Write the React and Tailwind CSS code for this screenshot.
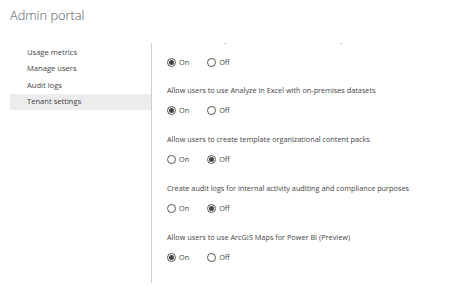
const sections = [
  { label: "Allow users to use Analyze in Excel with on-premises datasets", on: true },
  { label: "Allow users to create template organizational content packs", on: false },
  { label: "Create audit logs for internal activity auditing and compliance purposes", on: false },
  { label: "Allow users to use ArcGIS Maps for Power BI (Preview)", on: true },
]

const navItems = ["Usage metrics", "Manage users", "Audit logs", "Tenant settings"]

function Radio({ checked, label }) {
  return (
    <span className="flex items-center gap-[3px]">
      <span className="flex h-[9px] w-[9px] items-center justify-center rounded-full border border-[#555]">
        {checked && <span className="h-[5px] w-[5px] rounded-full bg-[#444]" />}
      </span>
      <span>{label}</span>
    </span>
  )
}

function RadioRow({ on }) {
  return (
    <div className="flex h-[12px] items-center gap-[18px]">
      <Radio checked={on} label="On" />
      <Radio checked={!on} label="Off" />
    </div>
  )
}

export default function App() {
  return (
    <div className="h-[295px] w-[456px] overflow-hidden bg-white text-[#444] font-['Segoe_UI','Open_Sans',sans-serif]">
      <h1 className="pl-[10px] pt-[5px] text-[12.8px] font-light leading-[20px] text-[#555]">
        Admin portal
      </h1>

      <div className="mt-[18px] flex">
        <nav className="ml-[10px] w-[141px] pt-[1px] text-[7.6px]">
          {navItems.map((item) => (
            <div
              key={item}
              className={
                "flex h-[16.6px] items-center pl-[17px] " +
                (item === "Tenant settings" ? "bg-[#ececec]" : "")
              }
            >
              {item}
            </div>
          ))}
        </nav>

        <div className="h-[240px] flex-1 overflow-hidden border-l border-[#cfcfcf] pl-[15px] text-[7.3px]">
          {/* previous setting, scrolled mostly out of view */}
          <div className="-mt-[10px] flex h-[12px] items-center whitespace-nowrap">
            Allow users to export data from dashboards and reports
          </div>
          <div className="mt-[11px] mb-[16.75px]">
            <RadioRow on />
          </div>
          {sections.map((s) => (
            <div key={s.label} className="mb-[16.75px]">
              <div className="flex h-[12px] items-center whitespace-nowrap">{s.label}</div>
              <div className="mt-[8px]">
                <RadioRow on={s.on} />
              </div>
            </div>
          ))}
        </div>
      </div>
    </div>
  )
}
